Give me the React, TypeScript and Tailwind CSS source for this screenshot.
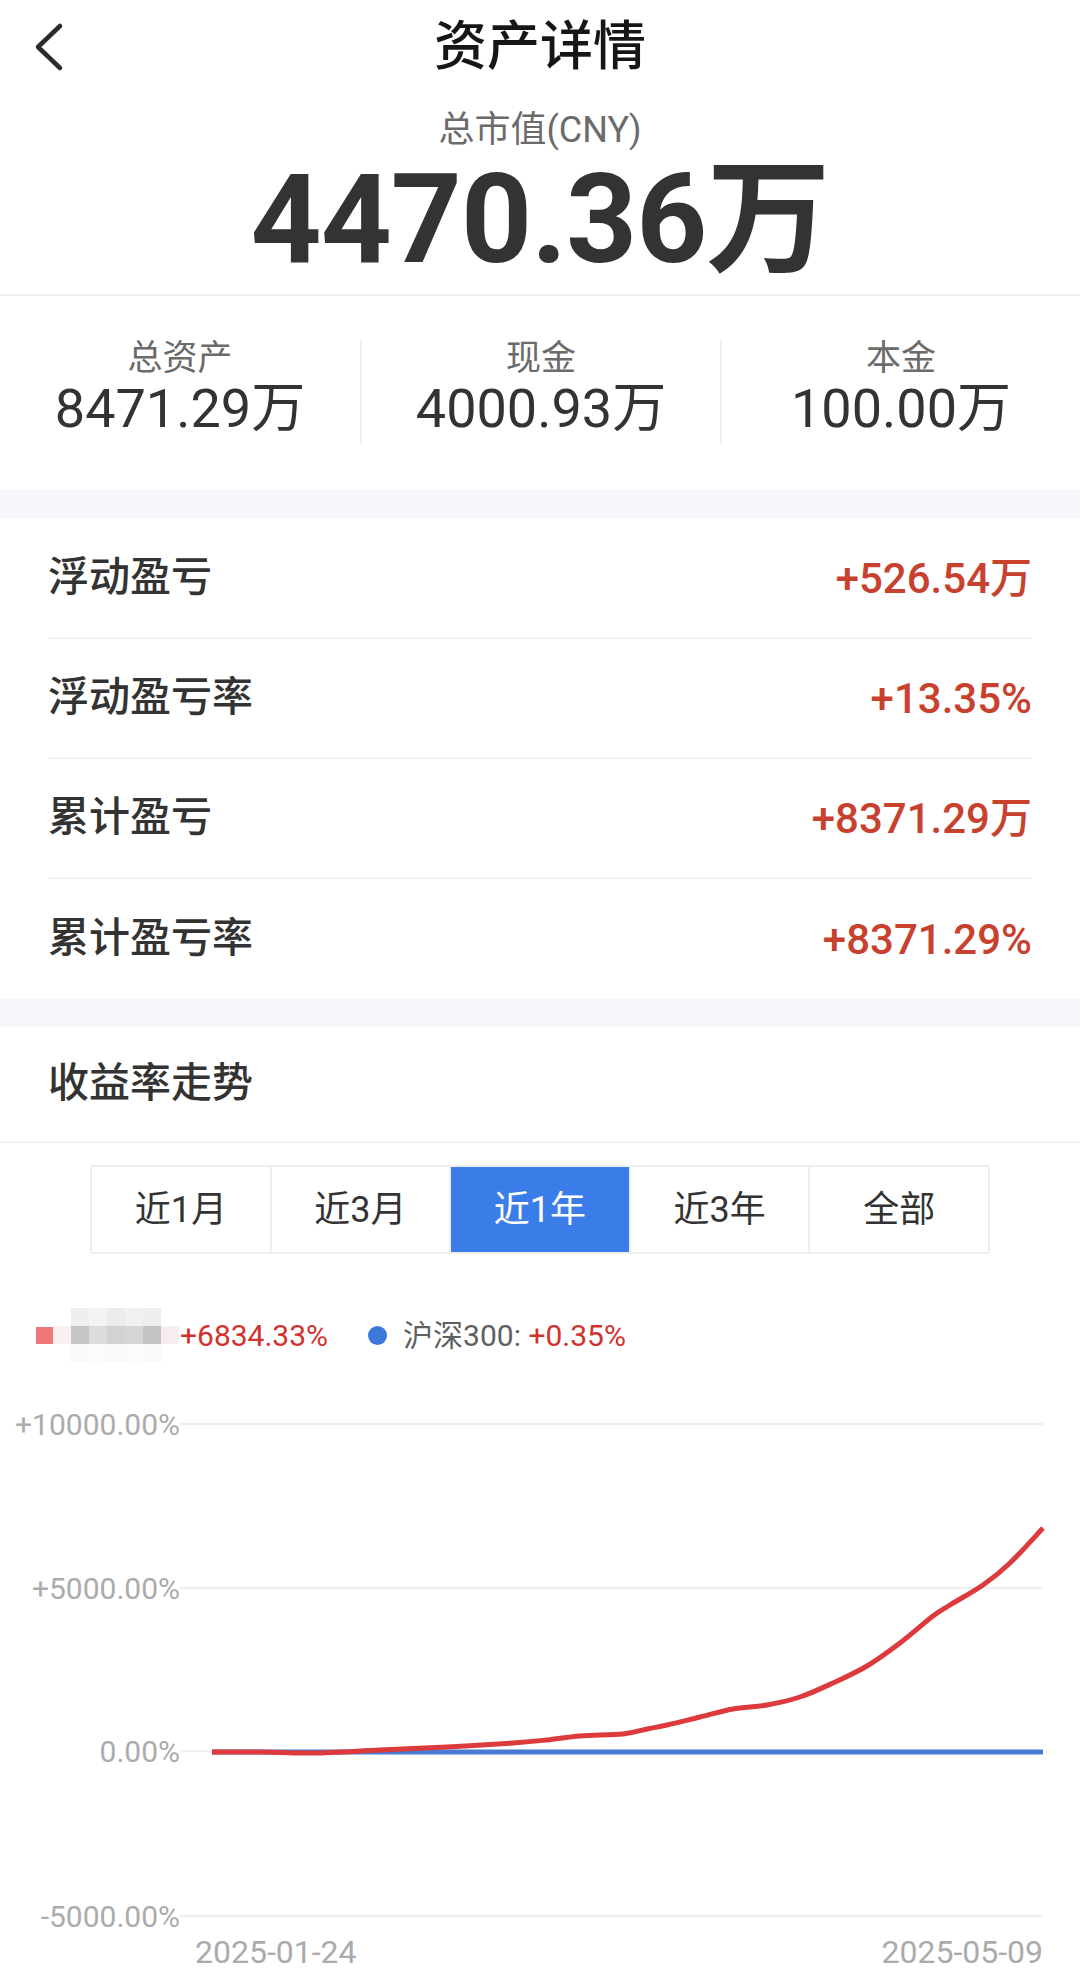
import React from "react";

type Pt = [number, number];

// chart geometry, in page pixels; the svg starts at CHART_TOP
const CHART_TOP = 1357;
const grid = [
  { y: 1426, label: "+10000.00%" },
  { y: 1590, label: "+5000.00%" },
  { y: 1753, label: "0.00%" },
  { y: 1918, label: "-5000.00%" },
];

const redPts: Pt[] = [
  [212, 1754], [262, 1754], [313, 1755], [380, 1752], [447, 1749], [513, 1745],
  [547, 1742], [580, 1738], [623, 1736], [647, 1731], [667, 1727], [700, 1719],
  [733, 1711], [767, 1707], [800, 1699], [833, 1685], [867, 1668], [900, 1645],
  [933, 1618], [950, 1607], [983, 1587], [1010, 1565], [1043, 1530],
];

function smoothPath(pts: Pt[]) {
  const p = pts.map(([x, y]) => [x, y - CHART_TOP] as Pt);
  let d = `M${p[0][0]},${p[0][1]}`;
  for (let i = 0; i < p.length - 1; i++) {
    const p0 = p[i - 1] || p[i];
    const p1 = p[i];
    const p2 = p[i + 1];
    const p3 = p[i + 2] || p2;
    const c1x = p1[0] + (p2[0] - p0[0]) / 6;
    const c1y = p1[1] + (p2[1] - p0[1]) / 6;
    const c2x = p2[0] - (p3[0] - p1[0]) / 6;
    const c2y = p2[1] - (p3[1] - p1[1]) / 6;
    d += ` C${c1x},${c1y} ${c2x},${c2y} ${p2[0]},${p2[1]}`;
  }
  return d;
}

const stats = [
  { label: "总资产", value: "8471.29万" },
  { label: "现金", value: "4000.93万" },
  { label: "本金", value: "100.00万" },
];

const rows = [
  { label: "浮动盈亏", value: "+526.54万" },
  { label: "浮动盈亏率", value: "+13.35%" },
  { label: "累计盈亏", value: "+8371.29万" },
  { label: "累计盈亏率", value: "+8371.29%" },
];

const ranges = ["近1月", "近3月", "近1年", "近3年", "全部"];

// pixelated name in the legend (blurred in the screenshot)
const mosaic: { x: number; y: number; c: string }[] = [
  { x: 18, y: 0, c: "#efefef" },
  { x: 36, y: 0, c: "#f3f3f3" },
  { x: 54, y: 0, c: "#ececec" },
  { x: 72, y: 0, c: "#f1f1f1" },
  { x: 90, y: 0, c: "#eeeeee" },
  { x: 0, y: 18, c: "#fbf0f0" },
  { x: 18, y: 18, c: "#c6c6c6" },
  { x: 36, y: 18, c: "#dcdcdc" },
  { x: 54, y: 18, c: "#d2d2d2" },
  { x: 72, y: 18, c: "#d6d6d6" },
  { x: 90, y: 18, c: "#c4c4c4" },
  { x: 108, y: 18, c: "#f6eeee" },
  { x: 18, y: 36, c: "#fafafa" },
  { x: 36, y: 36, c: "#fbfbfb" },
  { x: 54, y: 36, c: "#fafafa" },
  { x: 72, y: 36, c: "#fbfbfb" },
  { x: 90, y: 36, c: "#fafafa" },
];

export default function App() {
  return (
    <div className="w-[1080px] min-h-[1979px] bg-white text-[#333333] font-[Roboto,'Noto_Sans_CJK_SC',sans-serif] overflow-hidden">
      {/* Top bar */}
      <div className="grid grid-cols-[1fr_auto_1fr] items-center h-[88px]">
        <div className="pl-[34px] pt-[2px]">
          <svg width="30" height="50" viewBox="0 0 30 50" fill="none" aria-hidden="true">
            <path d="M26 4 L4 25 L26 46" stroke="#2b2b2b" strokeWidth={4.5} strokeLinecap="round" strokeLinejoin="round" />
          </svg>
        </div>
        <h1 className="text-[53px] leading-[88px] font-medium text-[#161616] pt-[3px]">资产详情</h1>
        <div />
      </div>

      {/* Market value */}
      <div className="flex flex-col items-center pt-[20px] pb-[10px] border-b-2 border-[#f1f1f1]">
        <div className="text-[36px] leading-[44px] text-[#6b6b6b]">总市值(CNY)</div>
        <div className="text-[124px] leading-[120px] font-bold text-[#333333] mt-[8px] mb-[4px] tracking-[-1px]">4470.36万</div>
      </div>

      {/* Asset summary */}
      <div className="grid grid-cols-3 pt-[43px] pb-[45px]">
        {stats.map((s, i) => (
          <div
            key={s.label}
            className={`flex flex-col items-center h-[105px] ${i > 0 ? "border-l-2 border-[#f0f0f0]" : ""}`}
          >
            <div className="text-[35px] leading-[40px] text-[#6b6b6b]">{s.label}</div>
            <div className="text-[54px] leading-[60px] text-[#333333]">{s.value}</div>
          </div>
        ))}
      </div>

      <div className="h-[30px] bg-[#f7f8fc]" />

      {/* Profit rows */}
      <div className="px-[48px]">
        {rows.map((r, i) => (
          <div
            key={r.label}
            className={`flex items-center justify-between h-[120px] ${i < rows.length - 1 ? "border-b-2 border-[#f1f1f1]" : ""}`}
          >
            <span className="text-[41px] font-medium text-[#333333]">{r.label}</span>
            <span className="text-[42px] font-medium text-[#c8412f]">{r.value}</span>
          </div>
        ))}
      </div>

      <div className="h-[28px] bg-[#f7f8fc]" />

      {/* Trend */}
      <div className="h-[116px] flex items-center pl-[48px] border-b-2 border-[#f1f1f1]">
        <span className="text-[41px] font-medium text-[#333333]">收益率走势</span>
      </div>

      <div className="pt-[22px]">
        <div className="mx-auto w-[900px] h-[89px] flex border-2 border-[#eeeeee]">
          {ranges.map((r, i) => (
            <div
              key={r}
              className={`flex-1 flex items-center justify-center text-[36px] ${
                i > 0 ? "border-l-2 border-[#eeeeee]" : ""
              } ${i === 2 ? "bg-[#3b7de8] text-white border-[#3b7de8]" : "text-[#333333]"}`}
            >
              {r}
            </div>
          ))}
        </div>
      </div>

      {/* Legend */}
      <div className="mt-[61px] h-[40px] flex items-center pl-[36px] text-[30px]">
        <span className="w-[17px] h-[17px] bg-[#f07777]" />
        <svg width="127" height="54" viewBox="0 0 127 54" aria-hidden="true">
          {mosaic.map((m, i) => (
            <rect key={i} x={m.x} y={m.y} width="18" height="18" fill={m.c} />
          ))}
        </svg>
        <span className="text-[#d0322e]">+6834.33%</span>
        <span className="ml-[40px] w-[19px] h-[19px] rounded-full bg-[#3b78d8]" />
        <span className="ml-[16px] text-[#5f5f5f]">沪深300:&nbsp;</span>
        <span className="text-[#d0322e]">+0.35%</span>
      </div>

      {/* Chart */}
      <svg width="1080" height="622" viewBox="0 0 1080 622" className="block" aria-label="收益率走势图">
        {grid.map((g) => (
          <g key={g.label}>
            <line x1="180" x2="1043" y1={g.y - CHART_TOP} y2={g.y - CHART_TOP} stroke="#f0f0f0" strokeWidth={2.5} />
            <text
              x="180"
              y={g.y - CHART_TOP + 11}
              textAnchor="end"
              fontSize="30"
              fill="#ababab"
              fontFamily="Roboto, sans-serif"
            >
              {g.label}
            </text>
          </g>
        ))}
        <line x1="212" x2="1043" y1={1754 - CHART_TOP} y2={1754 - CHART_TOP} stroke="#4a7bd2" strokeWidth={5} />
        <path d={smoothPath(redPts)} fill="none" stroke="#dc3a3c" strokeWidth={5} strokeLinejoin="round" />
        <text x="195" y={1965 - CHART_TOP} fontSize="32" fill="#ababab" fontFamily="Roboto, sans-serif">
          2025-01-24
        </text>
        <text x="1043" y={1965 - CHART_TOP} textAnchor="end" fontSize="32" fill="#ababab" fontFamily="Roboto, sans-serif">
          2025-05-09
        </text>
      </svg>
    </div>
  );
}
